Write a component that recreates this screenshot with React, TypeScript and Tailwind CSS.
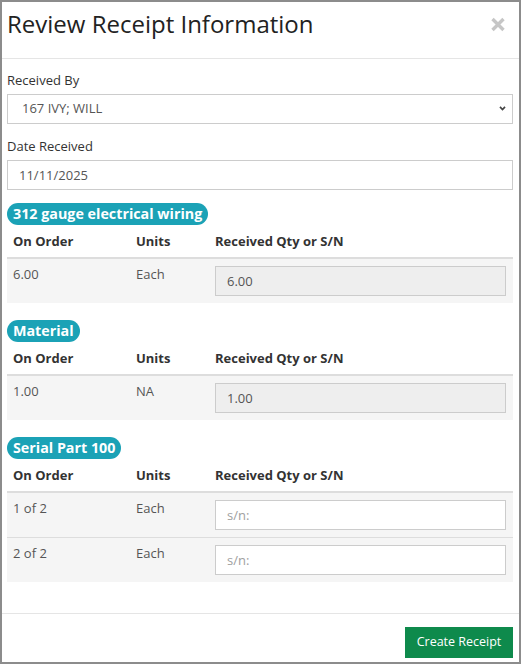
import React from "react";

type Row = { onOrder: string; units: string; value?: string; placeholder?: string };
type Section = { title: string; rows: Row[] };

const sections: Section[] = [
  { title: "312 gauge electrical wiring", rows: [{ onOrder: "6.00", units: "Each", value: "6.00" }] },
  { title: "Material", rows: [{ onOrder: "1.00", units: "NA", value: "1.00" }] },
  {
    title: "Serial Part 100",
    rows: [
      { onOrder: "1 of 2", units: "Each", placeholder: "s/n:" },
      { onOrder: "2 of 2", units: "Each", placeholder: "s/n:" },
    ],
  },
];

function ItemSection({ section, first }: { section: Section; first: boolean }) {
  return (
    <div className={first ? "mt-[13px]" : "mt-[17px]"}>
      <div className="flex">
        <span className="flex h-[22px] items-center rounded-full bg-[#1ba2b6] px-[6px] text-[14.3px] font-bold leading-none text-white">
          {section.title}
        </span>
      </div>
      <div className="grid grid-cols-[123px_79px_1fr] border-b-2 border-[#dddddd] text-[13px] font-bold leading-[18px] text-[#333]">
        <div className="pl-[6px] pt-[7px] pb-[7px]">On Order</div>
        <div className="pl-[6px] pt-[7px] pb-[7px]">Units</div>
        <div className="pl-[6px] pt-[7px] pb-[7px]">Received Qty or S/N</div>
      </div>
      {section.rows.map((r, i) => (
        <div
          key={i}
          className={
            "grid grid-cols-[123px_79px_1fr] bg-[#f5f5f5] text-[13px] leading-[18px] text-[#555]" +
            (i > 0 ? " border-t border-[#dddddd]" : "")
          }
        >
          <div className="pl-[6px] pt-[6px]">{r.onOrder}</div>
          <div className="pl-[6px] pt-[6px]">{r.units}</div>
          <div className="pl-[6px] pr-[7px] pt-[7px] pb-[7px]">
            {r.value !== undefined ? (
              <input
                disabled
                value={r.value}
                readOnly
                className="block h-[30px] w-full border border-[#cccccc] bg-[#eeeeee] px-[11px] text-[13px] text-[#555] outline-none"
              />
            ) : (
              <input
                placeholder={r.placeholder}
                className="block h-[30px] w-full border border-[#cccccc] bg-white px-[11px] text-[13px] text-[#555] outline-none placeholder:text-[#a0a0a0]"
              />
            )}
          </div>
        </div>
      ))}
    </div>
  );
}

export default function App() {
  return (
    <div className="h-[664px] w-[521px] border-2 border-[#8c8c8c] bg-white font-['Open_Sans','Liberation_Sans',sans-serif]">
      {/* modal header */}
      <div className="flex items-start justify-between border-b border-[#e5e5e5] pl-[5px] pr-[14px] pt-[6px] pb-[18px]">
        <h1 className="text-[24px] font-normal leading-[32px] text-[#222]">Review Receipt Information</h1>
        <button className="mt-[9px] h-[15px] w-[14px]" aria-label="Close">
          <svg viewBox="0 0 14 15" className="h-[15px] w-[14px]">
            <path d="M1.5 2 L12.5 13 M12.5 2 L1.5 13" stroke="#c6c6c6" strokeWidth="3.4" strokeLinecap="butt" />
          </svg>
        </button>
      </div>

      {/* modal body */}
      <div className="pl-[5px] pr-[6px] pt-[12px] pb-[31px]">
        <label className="mb-[5px] block text-[13px] font-medium leading-[18px] text-[#333]">Received By</label>
        <div className="relative">
          <select className="block h-[30px] w-full appearance-none border border-[#cccccc] bg-white pl-[14px] text-[13px] text-[#555] outline-none">
            <option>167 IVY; WILL</option>
          </select>
          <svg
            viewBox="0 0 8 6"
            className="pointer-events-none absolute right-[7px] top-[12px] h-[5px] w-[7px]"
          >
            <path d="M1 1 L4 4.3 L7 1" fill="none" stroke="#444" strokeWidth="2" />
          </svg>
        </div>

        <label className="mt-[13px] mb-[5px] block text-[13px] font-medium leading-[18px] text-[#333]">
          Date Received
        </label>
        <input
          value="11/11/2025"
          readOnly
          className="block h-[30px] w-full border border-[#cccccc] bg-white px-[11px] text-[13px] text-[#555] outline-none"
        />

        {sections.map((s, i) => (
          <ItemSection key={s.title} section={s} first={i === 0} />
        ))}
      </div>

      {/* modal footer */}
      <div className="flex justify-end border-t border-[#e5e5e5] pr-[6px] pt-[13px]">
        <button className="h-[31px] w-[108px] bg-[#0e8a4c] text-[12.5px] text-white">Create Receipt</button>
      </div>
    </div>
  );
}
